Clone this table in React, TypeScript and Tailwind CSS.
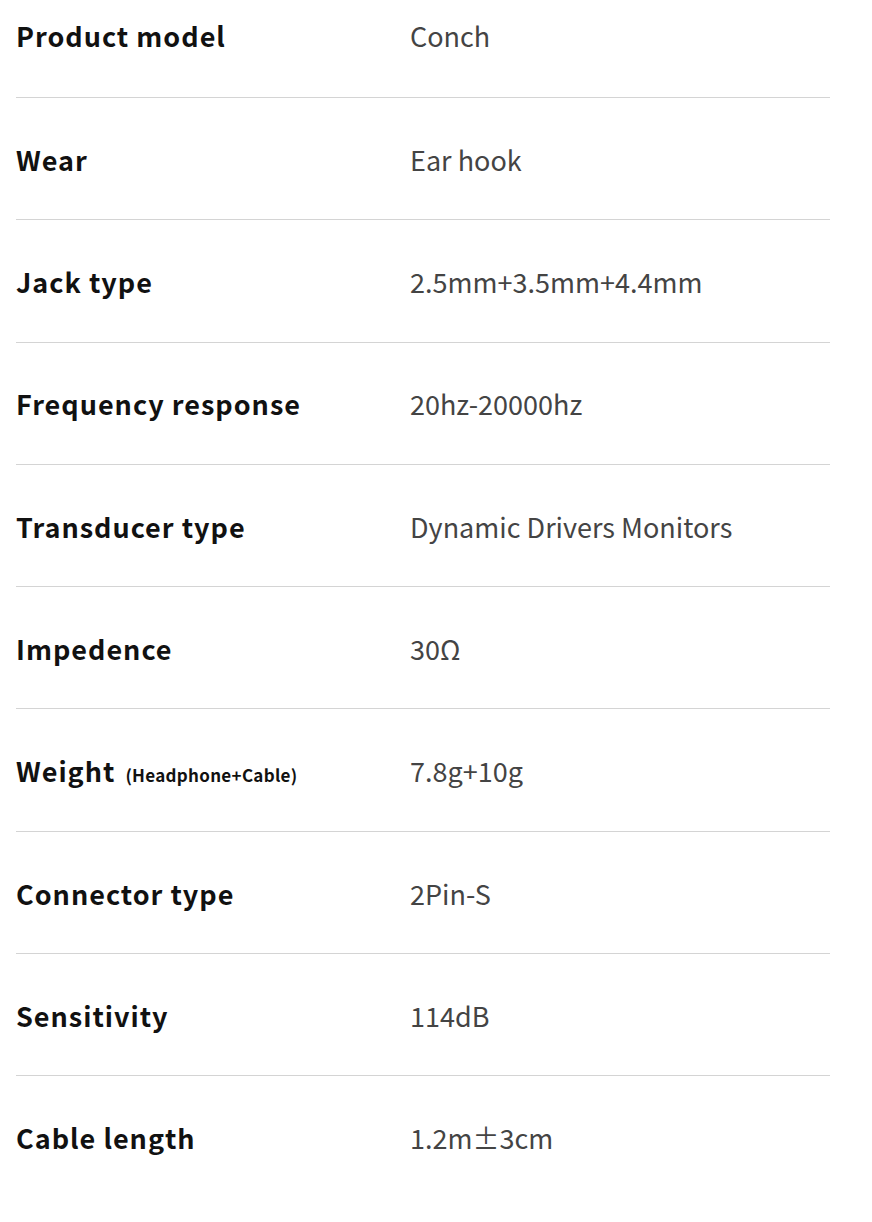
const specs: { label: string; note?: string; value: string }[] = [
  { label: "Product model", value: "Conch" },
  { label: "Wear", value: "Ear hook" },
  { label: "Jack type", value: "2.5mm+3.5mm+4.4mm" },
  { label: "Frequency response", value: "20hz-20000hz" },
  { label: "Transducer type", value: "Dynamic Drivers Monitors" },
  { label: "Impedence", value: "30Ω" },
  { label: "Weight", note: "(Headphone+Cable)", value: "7.8g+10g" },
  { label: "Connector type", value: "2Pin-S" },
  { label: "Sensitivity", value: "114dB" },
  { label: "Cable length", value: "1.2m±3cm" },
];

export default function App() {
  return (
    <div
      className="min-h-screen bg-white"
      style={{ fontFamily: '"Noto Sans CJK SC", "Noto Sans", sans-serif' }}
    >
      <div className="ml-[16px] w-[814px]">
        {specs.map((s, i) => (
          <div
            key={s.label}
            className={`flex items-center h-[38px] box-content ${
              i === 0 ? "pt-[17px] pb-[42px]" : "pt-[43px] pb-[40.3px]"
            } ${i < specs.length - 1 ? "border-b border-[#d4d4d4]" : ""}`}
          >
            <div className="w-[394px] flex items-baseline">
              <span className="text-[27px] font-bold tracking-[1px] text-[#111]">{s.label}</span>
              {s.note && (
                <span className="ml-[10px] text-[17px] font-bold tracking-[0.3px] text-[#111]">
                  {s.note}
                </span>
              )}
            </div>
            <span className="text-[27px] text-[#444]">{s.value}</span>
          </div>
        ))}
      </div>
    </div>
  );
}
